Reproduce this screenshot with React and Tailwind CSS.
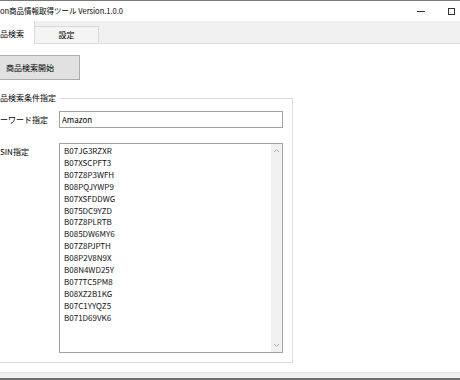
import React from 'react';

const asins = [
    'B07JG3RZXR',
    'B07XSCPFT3',
    'B07Z8P3WFH',
    'B08PQJYWP9',
    'B07XSFDDWG',
    'B075DC9YZD',
    'B07Z8PLRTB',
    'B085DW6MY6',
    'B07Z8PJPTH',
    'B08P2V8N9X',
    'B08N4WD25Y',
    'B077TC5PM8',
    'B08XZ2B1KG',
    'B07C1YYQZ5',
    'B071D69VK6',
];

const font = { fontFamily: '"Noto Sans CJK JP", "Noto Sans", sans-serif' };

const App = () => {
    return (
        <div className="w-[460px] h-[380px] overflow-hidden bg-white flex flex-col text-black" style={font}>
            {/* Window top edge */}
            <div className="h-px bg-[#7a7a7a]" />

            {/* Title bar */}
            <div className="h-[20px] flex items-center justify-between">
                <span className="text-[7.5px] leading-none whitespace-nowrap">on商品情報取得ツール Version.1.0.0</span>
                <div className="flex items-center h-full">
                    <div className="w-[8px] h-px bg-[#333] mr-[23px] mt-[1px]" />
                    <div className="w-[7px] h-[7px] border border-[#333] mr-[5px]" />
                </div>
            </div>

            {/* Tabs */}
            <div className="h-[23px] bg-[#f0f0f0] border-b border-[#dadada] flex items-end">
                <div className="w-[35px] h-[23px] bg-white -mb-px border-r border-[#dadada] flex items-center pt-[2px]">
                    <span className="text-[8px] leading-none whitespace-nowrap">品検索</span>
                </div>
                <div className="w-[64px] h-[17px] bg-[#f4f4f4] border-t border-r border-[#dadada] flex items-center justify-center">
                    <span className="text-[8px] leading-none">設定</span>
                </div>
            </div>

            {/* Tab content */}
            <div className="flex-1 bg-white flex flex-col">
                <button className="-ml-[20px] mt-[11px] w-[100px] h-[25px] bg-[#e1e1e1] border border-[#adadad] flex items-center justify-center text-[8px] leading-none">
                    商品検索開始
                </button>

                {/* Group box */}
                <div className="relative mt-[18px] w-[293px] h-[265px] border-t border-r border-b border-[#dcdcdc] flex flex-col">
                    <span className="absolute left-0 -top-[6px] bg-white pr-[3px] text-[8px] leading-[10px] whitespace-nowrap">品検索条件指定</span>

                    <div className="mt-[12px] flex items-center">
                        <span className="w-[59px] text-[8px] leading-none whitespace-nowrap">ーワード指定</span>
                        <div className="w-[224px] h-[17px] border border-[#a3a3a3] flex items-center pl-[2px] text-[8px] leading-none">
                            Amazon
                        </div>
                    </div>

                    <div className="mt-[15px] flex items-start">
                        <span className="w-[59px] mt-[5px] text-[8px] leading-none whitespace-nowrap">SIN指定</span>
                        <div className="w-[224px] h-[210px] border border-[#a3a3a3] flex">
                            <div className="flex-1 pl-[4px] pt-[1px] text-[8px] leading-[11.9px] text-[#111]">
                                {asins.map(a => (
                                    <div key={a}>{a}</div>
                                ))}
                            </div>
                            <div className="w-[11px] bg-[#f0f0f0] flex flex-col items-center justify-between py-[4px]">
                                <svg width="7" height="5" viewBox="0 0 7 5">
                                    <path d="M1 4 L3.5 1.5 L6 4" fill="none" stroke="#a8a8a8" strokeWidth="1" />
                                </svg>
                                <svg width="7" height="5" viewBox="0 0 7 5">
                                    <path d="M1 1 L3.5 3.5 L6 1" fill="none" stroke="#a8a8a8" strokeWidth="1" />
                                </svg>
                            </div>
                        </div>
                    </div>
                </div>
            </div>

            {/* Window bottom */}
            <div className="h-[6px] bg-[#f0f0f0] border-t border-[#e4e4e4]" />
            <div className="h-[2px] bg-[#6e6e6e]" />
        </div>
    );
};

export default App;
